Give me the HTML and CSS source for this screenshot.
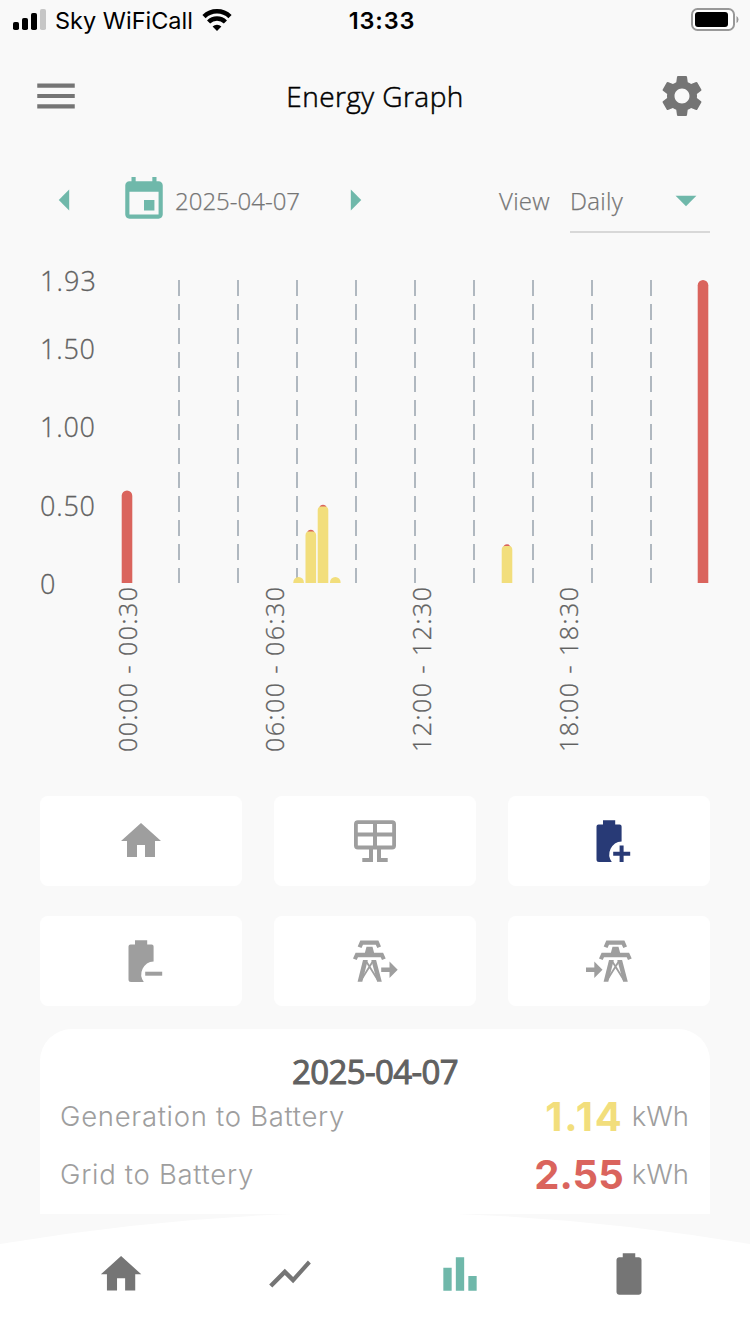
FILE: index.html
```html
<!DOCTYPE html>
<html lang="en">
<head>
  <meta charset="UTF-8">
  <meta name="viewport" content="width=device-width, initial-scale=1.0">
  <title>Energy Graph</title>
  <link rel="stylesheet" href="styles.css">
</head>
<body>
  <div class="status-bar">
    <div class="carrier">
      <svg class="signal" width="34" height="22" viewBox="0 0 34 22">
        <rect x="0" y="13" width="6" height="8" rx="1.8"/>
        <rect x="9" y="9" width="6" height="12" rx="1.8"/>
        <rect x="18" y="4" width="6" height="17" rx="1.8"/>
        <rect x="27" y="0" width="6" height="21" rx="1.8" fill="#c6c6c6"/>
      </svg>
      <span class="carrier-name">Sky WiFiCall</span>
      <svg width="30" height="22" viewBox="0 0 30 22">
        <path d="M2 7.6a18.6 18.6 0 0 1 26 0" fill="none" stroke="#000" stroke-width="4.6"/>
        <path d="M6.6 13a11.8 11.8 0 0 1 16.8 0" fill="none" stroke="#000" stroke-width="4.4"/>
        <path d="M10.6 17.4a6.4 6.4 0 0 1 8.8 0L15 22z"/>
      </svg>
    </div>
    <span class="time">13:33</span>
    <svg class="power" width="48" height="24" viewBox="0 0 48 24">
      <rect x="1" y="1" width="42" height="21" rx="5.5" fill="#fff" stroke="#999" stroke-width="2"/>
      <rect x="4" y="4" width="33" height="15" rx="3"/>
      <path d="M45.5 8q2 1 2 3.5t-2 3.5z" fill="#999"/>
    </svg>
  </div>

  <header class="header">
    <svg class="icon" viewBox="0 0 24 24"><path d="M3 18h18v-2H3v2zm0-5h18v-2H3v2zm0-7v2h18V6H3z"/></svg>
    <h1>Energy Graph</h1>
    <svg class="icon" viewBox="0 0 24 24"><path d="M19.14 12.94c.04-.3.06-.61.06-.94 0-.32-.02-.64-.07-.94l2.03-1.58c.18-.14.23-.41.12-.61l-1.92-3.32c-.12-.22-.37-.29-.59-.22l-2.39.96c-.5-.38-1.03-.7-1.62-.94L14.4 2.81c-.04-.24-.24-.41-.48-.41h-3.84c-.24 0-.43.17-.47.41L9.25 5.35C8.66 5.59 8.12 5.92 7.63 6.29L5.24 5.33c-.22-.08-.47 0-.59.22L2.74 8.87c-.12.21-.08.47.12.61l2.03 1.58C4.84 11.36 4.8 11.69 4.8 12s.02.64.07.94l-2.03 1.58c-.18.14-.23.41-.12.61l1.92 3.32c.12.22.37.29.59.22l2.39-.96c.5.38 1.03.7 1.62.94l.36 2.54c.05.24.24.41.48.41h3.84c.24 0 .44-.17.47-.41l.36-2.54c.59-.24 1.13-.56 1.62-.94l2.39.96c.22.08.47 0 .59-.22l1.92-3.32c.12-.22.07-.47-.12-.61l-2.01-1.58zM12 15.6c-1.98 0-3.6-1.62-3.6-3.6s1.62-3.6 3.6-3.6 3.6 1.62 3.6 3.6-1.62 3.6-3.6 3.6z"/></svg>
  </header>

  <div class="filters">
    <div class="date-picker">
      <svg class="icon" viewBox="0 0 24 24"><path d="M14 7l-5 5 5 5V7z"/></svg>
      <div class="date">
        <svg class="icon" viewBox="0 0 24 24"><path d="M17 12h-5v5h5v-5zM16 1v2H8V1H6v2H5c-1.11 0-1.99.9-1.99 2L3 19c0 1.1.89 2 2 2h14c1.1 0 2-.9 2-2V5c0-1.1-.9-2-2-2h-1V1h-2zm3 18H5V8h14v11z"/></svg>
        <span>2025-04-07</span>
      </div>
      <svg class="icon" viewBox="0 0 24 24"><path d="M10 17l5-5-5-5v10z"/></svg>
    </div>
    <div class="view">
      <span>View</span>
      <div class="select">
        <span>Daily</span>
        <svg class="icon" viewBox="0 0 24 24"><path d="M7 10l5 5 5-5z"/></svg>
      </div>
    </div>
  </div>

  <svg class="chart" width="750" height="515" viewBox="0 255 750 515">
    <g class="y-axis">
      <text x="40" y="291" textLength="56">1.93</text>
      <text x="40" y="359" textLength="55">1.50</text>
      <text x="40" y="437" textLength="55">1.00</text>
      <text x="40" y="516" textLength="55">0.50</text>
      <text x="40" y="594">0</text>
    </g>
    <g class="grid">
      <path d="M179 280V583M238 280V583M297 280V583M356 280V583M415 280V583M474 280V583M533 280V583M592 280V583M651 280V583"/>
    </g>
    <g class="grid-to-battery">
      <path d="M121.7 583V495.8a5.3 5.3 0 0 1 10.6 0V583z"/>
      <path d="M307 533q.8-3.2 3.8-3.2t3.8 3.2z"/>
      <path d="M319.2 508q.8-3.2 3.8-3.2t3.8 3.2z"/>
      <path d="M503.2 547.5q.8-3.2 3.8-3.2t3.8 3.2z"/>
      <path d="M697.7 583V285.3a5.3 5.3 0 0 1 10.6 0V583z"/>
    </g>
    <g class="generation-to-battery">
      <path d="M293.3 583v-.8a5.3 5.3 0 0 1 10.6 0v.8z"/>
      <path d="M305.5 583V535.5q0-4 3.3-4h4q3.3 0 3.3 4V583z"/>
      <path d="M317.7 583V510.5q0-4 3.3-4h4q3.3 0 3.3 4V583z"/>
      <path d="M330 583v-.8a5.3 5.3 0 0 1 10.6 0v.8z"/>
      <path d="M501.7 583V550q0-4 3.3-4h4q3.3 0 3.3 4V583z"/>
    </g>
    <g class="x-axis">
      <text transform="translate(137 752) rotate(-90)" textLength="165">00:00 - 00:30</text>
      <text transform="translate(284 752) rotate(-90)" textLength="165">06:00 - 06:30</text>
      <text transform="translate(431 752) rotate(-90)" textLength="165">12:00 - 12:30</text>
      <text transform="translate(578 752) rotate(-90)" textLength="165">18:00 - 18:30</text>
    </g>
  </svg>

  <div class="tiles">
    <div class="tile">
      <svg class="icon home" viewBox="0 0 24 24"><path d="M10 20v-6h4v6h5v-8h3L12 3 2 12h3v8z"/></svg>
    </div>
    <div class="tile">
      <svg class="icon" viewBox="0 0 50 50">
        <rect x="5.9" y="6.2" width="38.2" height="25.3" rx="2" fill="none" stroke="currentColor" stroke-width="3.8"/>
        <path d="M25 6v25M6 18.5h38M21 32v12h-8.7M29 32v12h8.7" fill="none" stroke="currentColor" stroke-width="4"/>
      </svg>
    </div>
    <div class="tile active">
      <svg class="icon" viewBox="0 0 50 50">
        <path d="M19 4.2h12.2v4.3h4.4q2 0 2 2v14.9A13 13 0 0 0 27.8 46H15q-2.5 0-2.5-2.5v-33q0-2 2-2H19z"/>
        <path d="M29.2 37.7h17M37.6 29.5v16.5" fill="none" stroke="currentColor" stroke-width="4"/>
      </svg>
    </div>
    <div class="tile">
      <svg class="icon" viewBox="0 0 50 50">
        <path d="M19 4.2h12.2v4.3h4.4q2 0 2 2v14.9A13 13 0 0 0 27.8 46H15q-2.5 0-2.5-2.5v-33q0-2 2-2H19z"/>
        <path d="M29.2 37.7h17" fill="none" stroke="currentColor" stroke-width="4"/>
      </svg>
    </div>
    <div class="tile">
      <svg class="icon" viewBox="0 0 50 50">
        <path d="M7.700 10.500l2.600-6h18.100l2.600 6-3.700 1.500-1.500-3.200H13l-1.500 3.200z"/>
        <path d="M16.500 10.800h6l1.600 6h9l2.600 5.700-3.700 1.600-1.300-2.800H8l-1.300 2.800L3 22.500l2.600-5.700h9.300z"/>
        <path d="M13 24h4.800L12.300 45.700H7.600zM21.300 24h4.800l5.700 21.700h-4.700z"/>
        <path d="M16 25l11.500 18.500M23 25L11.500 43.500" fill="none" stroke="currentColor" stroke-width="1.800"/>
        <path d="M31.200 31.500h8.300v-6l8.200 8.200-8.200 8.200v-6h-8.300z"/>
      </svg>
    </div>
    <div class="tile">
      <svg class="icon" viewBox="0 0 50 50">
        <g transform="translate(12 0)">
          <path d="M7.700 10.500l2.600-6h18.100l2.600 6-3.700 1.500-1.500-3.200H13l-1.500 3.200z"/>
          <path d="M16.500 10.800h6l1.600 6h9l2.600 5.700-3.700 1.600-1.300-2.800H8l-1.300 2.800L3 22.500l2.600-5.700h9.300z"/>
          <path d="M13 24h4.800L12.300 45.700H7.600zM21.300 24h4.800l5.700 21.700h-4.700z"/>
          <path d="M16 25l11.500 18.500M23 25L11.500 43.500" fill="none" stroke="currentColor" stroke-width="1.800"/>
        </g>
        <path d="M2 31.500h8.300v-6l8.200 8.200-8.200 8.200v-6H2z"/>
      </svg>
    </div>
  </div>

  <section class="summary">
    <h2>2025-04-07</h2>
    <div class="row">
      <span class="label">Generation to Battery</span>
      <span class="value generation">1.14</span>
      <span class="unit">kWh</span>
    </div>
    <div class="row">
      <span class="label">Grid to Battery</span>
      <span class="value grid-import">2.55</span>
      <span class="unit">kWh</span>
    </div>
  </section>

  <nav class="tab-bar">
    <svg class="curve" width="750" height="120" viewBox="0 0 750 120"><path d="M0 30Q375-33 750 30V120H0z"/></svg>
    <div class="tabs">
      <svg class="icon" viewBox="0 0 24 24"><path transform="translate(.4 .5) scale(.97)" d="M10 20v-6h4v6h5v-8h3L12 3 2 12h3v8z"/></svg>
      <svg class="icon" viewBox="0 0 24 24"><path d="M3.5 18.490l6-6.010 4 4L22 6.920l-1.410-1.410-7.090 7.970-4-4L2 16.990z"/></svg>
      <svg class="icon selected" viewBox="0 0 24 24"><path d="M4 9h4v11H4zM16 13h4v7h-4zM10 4h4v16h-4z"/></svg>
      <svg class="icon" viewBox="0 0 24 24"><path d="M16.670 4H15V2H9v2H7.330C6.600 4 6 4.600 6 5.330v15.340C6 21.400 6.600 22 7.330 22h9.340c.73 0 1.330-.6 1.330-1.330V5.330C18 4.600 17.400 4 16.670 4z"/></svg>
    </div>
  </nav>
</body>
</html>
```

FILE: styles.css
```css
* {
  box-sizing: border-box;
}

body {
  margin: 0;
  width: 750px;
  height: 1334px;
  display: flex;
  flex-direction: column;
  overflow: hidden;
  background: #f9f9f9;
  color: #757575;
  font-family: 'Open Sans', sans-serif;
  font-weight: 300;
}

svg {
  display: block;
}

.icon {
  width: 50px;
  height: 50px;
  flex: none;
  fill: currentColor;
}

.status-bar {
  height: 40px;
  padding: 0 11px 0 13px;
  display: grid;
  grid-template-columns: 1fr auto 1fr;
  align-items: center;
  color: #000;
  font-family: Inter, sans-serif;
}

.carrier {
  display: flex;
  align-items: center;
}

.carrier-name {
  margin: 1px 8px 0 8px;
  width: 139px;
  font-size: 23.5px;
  font-weight: 400;
  white-space: nowrap;
}

.time {
  padding: 1px 0 0 12px;
  font-size: 23.5px;
  font-weight: 600;
  letter-spacing: 0.8px;
}

.power {
  justify-self: end;
}

.header {
  height: 112px;
  padding: 0 43px 0 31px;
  display: flex;
  align-items: center;
  justify-content: space-between;
}

.header h1 {
  margin: 0 0 0 12px;
  color: #000;
  font-size: 28px;
  font-weight: 300;
  letter-spacing: 0.45px;
  -webkit-text-stroke: 0.5px;
}

.filters {
  height: 103px;
  padding: 17px 40px 0;
  display: flex;
  align-items: flex-start;
  justify-content: space-between;
  font-size: 24px;
  line-height: 52px;
  -webkit-text-stroke: 0.25px;
}

.filters .icon {
  color: #6fb8aa;
}

.date-picker,
.date,
.view {
  display: flex;
}

.date-picker {
  gap: 29px;
  padding-top: 6px;
}

.date {
  gap: 6px;
}

.date span {
  width: 126px;
}

.view {
  gap: 20px;
  padding-top: 6px;
  letter-spacing: 0.3px;
}

.select {
  width: 140px;
  height: 58px;
  display: flex;
  justify-content: space-between;
  border-bottom: 2px solid #d8d8d8;
}

.select .icon {
  margin-right: -1px;
}

.chart {
  flex: none;
}

.y-axis {
  fill: #616161;
  font-size: 27px;
}

.x-axis {
  fill: #616161;
  font-size: 25px;
}

.y-axis text,
.x-axis text {
  stroke: #616161;
  stroke-width: 0.3px;
}

.grid {
  fill: none;
  stroke: #b0b8c0;
  stroke-width: 2;
  stroke-dasharray: 16 8;
}

.grid-to-battery {
  fill: #da645d;
}

.generation-to-battery {
  fill: #f2de7c;
}

.tiles {
  margin: 26px 40px 0;
  display: grid;
  grid-template-columns: repeat(3, 202px);
  gap: 30px 32px;
}

.tile {
  height: 90px;
  display: flex;
  align-items: center;
  justify-content: center;
  background: #fff;
  border-radius: 8px;
  color: #9e9e9e;
}

.tile.active {
  color: #283a76;
}

.home {
  width: 48px;
}

.summary {
  height: 185px;
  margin: 23px 40px 0;
  padding: 22px 21px 0;
  background: #fff;
  border-radius: 32px 32px 0 0;
}

.summary h2 {
  margin: 0;
  color: #616161;
  font-size: 33px;
  font-weight: 400;
  line-height: 42px;
  text-align: center;
  letter-spacing: -0.6px;
  -webkit-text-stroke: 1px;
}

.row {
  height: 58px;
  display: flex;
  color: #9e9e9e;
  font-family: Inter, sans-serif;
  font-size: 27.5px;
  line-height: 46px;
  font-weight: 350;
}

.label {
  flex: 1;
  margin-left: -1px;
  letter-spacing: 0.7px;
}

.value {
  margin-right: 8px;
  font-size: 40px;
  font-weight: 700;
  line-height: 48px;
}

.generation {
  letter-spacing: 1.8px;
  color: #f2de7c;
}

.grid-import {
  color: #da645d;
}

.tab-bar {
  height: 120px;
  display: grid;
}

.curve,
.tabs {
  grid-area: 1 / 1;
}

.curve {
  fill: #fff;
}

.tabs {
  padding: 35px 96px 0;
  display: flex;
  justify-content: space-between;
}

.selected {
  color: #6fb8aa;
}
```
